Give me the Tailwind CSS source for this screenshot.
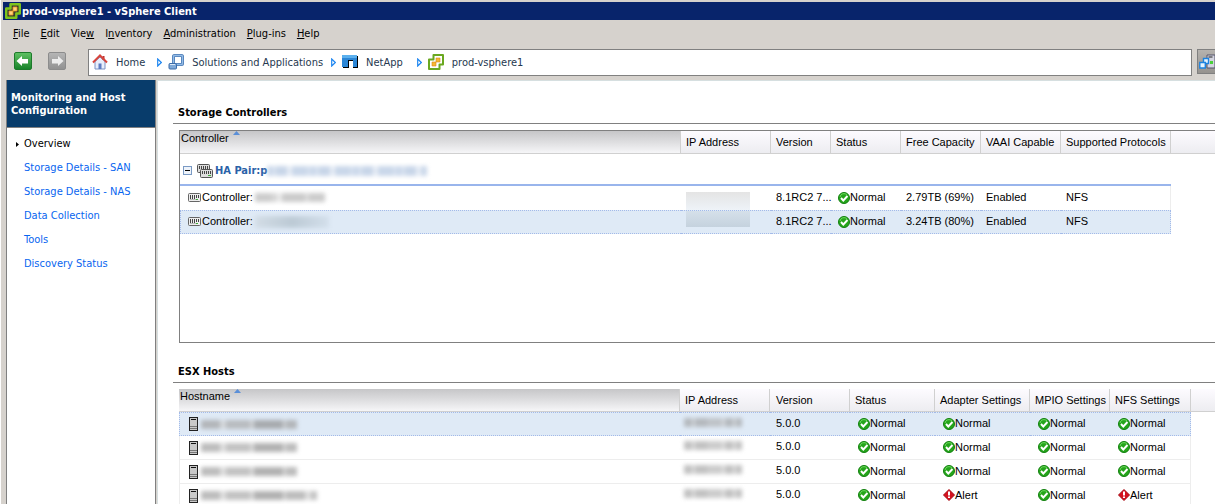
<!DOCTYPE html>
<html lang="en">
<head>
    <meta charset="UTF-8">
    <meta name="viewport" content="width=device-width, initial-scale=1.0">
    <title>prod-vsphere1 - vSphere Client</title>
    <script src="https://cdn.jsdelivr.net/npm/@tailwindcss/browser@4"></script>
</head>
<body class="h-screen overflow-hidden flex flex-col bg-[#d6d2cd] border-l border-white text-black font-['DejaVu_Sans_Condensed','Noto_Sans',sans-serif] text-[11px] leading-[13px]">

    <!-- icon sprite -->
    <svg class="hidden" aria-hidden="true">
        <symbol id="vsphere" viewBox="0 0 16 16">
            <path d="M5.500 1h9.500v9.500h-3.500V15H1V5.500h4.500z" fill="#fff" stroke="#6aa820" stroke-width="2" stroke-linejoin="round"/>
            <path d="M8 4h4v4H8z M4 8h4v4H4z" fill="#f7b733" stroke="#d88a18" stroke-width=".6"/>
        </symbol>
        <symbol id="vsphere-dark" viewBox="0 0 16 16">
            <path d="M5.500 1.200h9.300v9.300h-3.500v4.300H1.200V5.500h4.300z" fill="#3c3c30" stroke="#7fc41c" stroke-width="2.400" stroke-linejoin="round"/>
            <path d="M8 4h4v4H8z M4 8h4v4H4z" fill="#ffd37a" stroke="#e8951c" stroke-width=".8"/>
        </symbol>
        <symbol id="ok" viewBox="0 0 12 12">
            <circle cx="6" cy="6" r="5.500" fill="#25a51b" stroke="#12800f"/>
            <path d="M2 5a4 4 0 0 1 7-2" fill="none" stroke="#6bd85c"/>
            <path d="M3 6l2.300 2.500L9.500 4" fill="none" stroke="#fff" stroke-width="1.900"/>
        </symbol>
        <symbol id="alert" viewBox="0 0 12 12">
            <path d="M6 .5L11.500 6 6 11.500.5 6z" fill="#d5121e" stroke="#a30812"/>
            <path d="M5 2.500h2v4H5z M5 7.500h2v1.500H5z" fill="#fff"/>
        </symbol>
        <symbol id="controller" viewBox="0 0 13 9">
            <rect x=".5" y=".5" width="12" height="8" rx="1" fill="#eee" stroke="#666"/>
            <path d="M2.500 2v4M4.500 2v4M6.500 2v4M8.500 2v3M10.500 2v3" stroke="#444"/>
            <path d="M2 6.500h6" stroke="#bbb"/>
            <path d="M8 6.500h2" stroke="#3fae3a"/>
        </symbol>
        <symbol id="host" viewBox="0 0 9 14">
            <rect x=".5" y=".5" width="8" height="13" fill="#c9c9c9" stroke="#222"/>
            <path d="M2 2.500h5" stroke="#111"/>
            <path d="M1 9.500h7M1 11.500h7" stroke="#777"/>
        </symbol>
        <symbol id="crumb" viewBox="0 0 5 9">
            <path d="M.7 1v7L4.300 4.500z" fill="#fff" stroke="#1e86f0" stroke-width="1.200"/>
        </symbol>
        <symbol id="arrow" viewBox="0 0 16 16">
            <path d="M1.500 8L7 3v3h6v4.500H7V13z" fill="#fff"/>
        </symbol>
    </svg>

    <!-- title bar -->
    <header class="mt-[2px] ml-[2px] h-[18px] shrink-0 bg-[#08246b] flex items-center gap-px pl-[2px]">
        <svg class="size-4"><use href="#vsphere-dark"/></svg>
        <h1 class="font-bold text-white">prod-vsphere1 - vSphere Client</h1>
    </header>

    <!-- menu -->
    <nav class="h-[27px] shrink-0 flex items-center gap-[11px] pl-3" aria-label="Menu">
        <button type="button"><u>F</u>ile</button>
        <button type="button"><u>E</u>dit</button>
        <button type="button">Vie<u>w</u></button>
        <button type="button">I<u>n</u>ventory</button>
        <button type="button"><u>A</u>dministration</button>
        <button type="button"><u>P</u>lug-ins</button>
        <button type="button"><u>H</u>elp</button>
    </nav>

    <!-- navigation bar -->
    <div class="h-[33px] shrink-0 flex items-start pt-[2px] pl-[13px]">
        <button type="button" aria-label="Back" class="mt-[3px] size-[18px] rounded-xs border border-[#1d7a2b] bg-linear-to-b from-[#5cbf61] to-[#16852b]">
            <svg class="size-4"><use href="#arrow"/></svg>
        </button>
        <button type="button" aria-label="Forward" class="mt-[3px] ml-4 size-[18px] rounded-xs border border-[#8c8c8c] bg-linear-to-b from-[#b5b5b5] to-[#929292]">
            <svg class="size-4 -scale-x-100 opacity-80"><use href="#arrow"/></svg>
        </button>
        <nav class="ml-[22px] h-[27px] flex-1 bg-white border border-[#808080] flex items-center pl-[3px] pb-px text-[#26384f]" aria-label="Location">
            <a href="#" class="flex items-center gap-2">
                <svg class="size-4" viewBox="0 0 16 16">
                    <path d="M3 7.500L8 3l5 4.500V15H3z" fill="#e8eefb" stroke="#7b92c4"/>
                    <path d="M10.500 2h2v4h-2z" fill="#b33"/>
                    <path d="M1 8.500L8 1.500l7 7" fill="none" stroke="#d8453c" stroke-width="2"/>
                    <path d="M6.500 9.500h3V15h-3z" fill="#5d7cc2"/>
                </svg>
                Home
            </a>
            <svg class="ml-3 mr-[6px] w-[5px] h-[9px]"><use href="#crumb"/></svg>
            <a href="#" class="flex items-center gap-2">
                <svg class="size-4" viewBox="0 0 16 16">
                    <rect x="5.500" y="1.500" width="9" height="9" rx="1" fill="#fff" stroke="#4a7ab5" stroke-width="3"/>
                    <rect x="5.500" y="1.500" width="9" height="9" rx="1" fill="none" stroke="#94bce6" stroke-width="1.400"/>
                    <rect x="1" y="9.500" width="7.500" height="5.500" rx="1" fill="#7fa9d8" stroke="#3a6ba8"/>
                    <path d="M2 10.500h5" stroke="#dbe9f8"/>
                </svg>
                Solutions and Applications
            </a>
            <svg class="ml-2 mr-[6px] w-[5px] h-[9px]"><use href="#crumb"/></svg>
            <a href="#" class="flex items-center gap-2">
                <svg class="size-4" viewBox="0 0 16 16">
                    <path d="M1 2h15v12h-5V7H7v7H1z" fill="#000"/>
                    <path d="M0 1h15v12h-4V6H6v7H0z" fill="#2b86d6"/>
                    <path d="M0 1h15v3H0z" fill="#5bb0ee"/>
                </svg>
                NetApp
            </a>
            <svg class="ml-[14px] mr-[6px] w-[5px] h-[9px]"><use href="#crumb"/></svg>
            <a href="#" class="flex items-center gap-2">
                <svg class="size-4"><use href="#vsphere"/></svg>
                prod-vsphere1
            </a>
        </nav>
        <button type="button" aria-label="Search inventory" class="ml-[5px] h-[25px] w-[18px] border border-r-0 border-[#808080] bg-linear-to-b from-[#b5b2ae] to-[#96938f] flex items-center pl-px">
            <svg class="size-4" viewBox="0 0 16 16">
                <path d="M8 1h8v13H8z" fill="#d4d4e0" stroke="#55556a"/>
                <path d="M9.500 3h4" stroke="#222"/>
                <path d="M11 7h3v3h-3z" fill="#4ad03a"/>
                <path d="M4.500 4.500h5v5h-5z" fill="#e6f4ff" stroke="#1d83e0" stroke-width="1.400"/>
                <path d="M.8 8.500h5.500V14H.8z" fill="#e6f4ff" stroke="#1d83e0" stroke-width="1.400"/>
            </svg>
        </button>
    </div>

    <div class="flex-1 min-h-0 flex pl-[5px]">
        <!-- sidebar -->
        <aside class="w-[150px] shrink-0 bg-white border-x border-[#808080]">
            <h2 class="h-12 bg-[#083c6b] text-white font-bold pl-1 pt-[11px] border-b border-[#808080]">Monitoring and Host Configuration</h2>
            <ul class="pt-1 pl-[17px] leading-6 text-[#0865f0]">
                <li class="-ml-2 flex items-center gap-[5px] text-black">
                    <svg class="w-[3px] h-[5px]" viewBox="0 0 3 5"><path d="M0 0v5l3-2.500z"/></svg>
                    <a href="#">Overview</a>
                </li>
                <li><a href="#">Storage Details - SAN</a></li>
                <li><a href="#">Storage Details - NAS</a></li>
                <li><a href="#">Data Collection</a></li>
                <li><a href="#">Tools</a></li>
                <li><a href="#">Discovery Status</a></li>
            </ul>
        </aside>

        <main class="flex-1 min-w-0 ml-px bg-white border-t border-l border-[#d6dfe0] pl-[15px]">
            <section>
                <h2 class="font-bold pt-[25px] pb-1 pl-[5px] border-b border-[#808080]">Storage Controllers</h2>
                <div class="mt-[6px] ml-[6px] h-[213px] border border-r-0 border-[#808080]">
                    <table class="w-full table-fixed border-separate border-spacing-0 whitespace-nowrap font-['Liberation_Sans',Arial,sans-serif] text-left">
                        <colgroup>
                            <col class="w-[501px]"><col class="w-[90px]"><col class="w-[60px]"><col class="w-[70px]"><col class="w-[80px]"><col class="w-[80px]"><col class="w-[110px]"><col>
                        </colgroup>
                        <thead>
                            <tr class="h-[23px] bg-linear-to-b from-[#fdfbff] to-[#ececf0] *:font-normal *:p-0 *:border-b *:border-[#d0d0d0]">
                                <th class="align-top border-r bg-linear-to-b from-[#c6c6c8] to-[#f6f6f8]">
                                    <div class="flex items-start gap-1 pl-px"><span class="pt-px">Controller</span><svg class="w-[7px] h-1" viewBox="0 0 7 4"><path d="M0 4h7L3.500 0z" fill="#5a8fd8"/></svg></div>
                                </th>
                                <th class="border-r"><span class="pl-[5px]">IP Address</span></th>
                                <th class="border-r"><span class="pl-[5px]">Version</span></th>
                                <th class="border-r"><span class="pl-[5px]">Status</span></th>
                                <th class="border-r"><span class="pl-[5px]">Free Capacity</span></th>
                                <th class="border-r"><span class="pl-[5px]">VAAI Capable</span></th>
                                <th class="border-r"><span class="pl-[5px]">Supported Protocols</span></th>
                                <th></th>
                            </tr>
                        </thead>
                        <tbody>
                            <tr class="h-8">
                                <th colspan="7" class="p-0 border-b-2 border-[#99b5ec] font-['DejaVu_Sans_Condensed','Noto_Sans',sans-serif] text-[#2b62a8]">
                                    <div class="flex items-center pl-[3px] pt-[3px]">
                                        <button type="button" aria-label="Collapse group" class="size-[9px] border border-[#7a9ac4] bg-[#eef3fa] flex items-center justify-center"><span class="w-[5px] h-px bg-black"></span></button>
                                        <svg class="ml-[5px] w-4 h-[14px]" viewBox="0 0 16 14">
                                            <rect x=".5" y=".5" width="12" height="8" rx="1" fill="#ddd" stroke="#555"/>
                                            <path d="M2.500 2v3M4.500 2v3M6.500 2v3M8.500 2v3M10.500 2v3" stroke="#444"/>
                                            <rect x="3.500" y="5.500" width="12" height="8" rx="1" fill="#ddd" stroke="#555"/>
                                            <path d="M5.500 7v3M7.500 7v3M9.500 7v3M11.500 7v3M13.500 7v3" stroke="#444"/>
                                            <path d="M11 11.500h3" stroke="#3fae3a"/>
                                        </svg>
                                        <span class="ml-[2px]">HA Pair:p</span>
                                        <span class="w-40 h-[10px] opacity-60 blur-[2px] bg-[repeating-linear-gradient(90deg,#a9bfde_0_6px,#c2d1e6_6px_9px,#a3bada_9px_20px,#d8e2f0_20px_25px,#a6bddc_25px_40px,#bdcee5_40px_43px)]"></span>
                                    </div>
                                </th>
                                <td></td>
                            </tr>
                            <tr class="h-6 *:p-0">
                                <td><div class="flex items-center pl-2 pb-px"><svg class="w-[13px] h-[9px] mr-px"><use href="#controller"/></svg>Controller:<span class="ml-[2px] w-[70px] h-[9px] opacity-60 blur-[2px] bg-[repeating-linear-gradient(90deg,#aaa_0_16px,#bbb_16px_22px,#ddd_22px_27px,#a8a8a8_27px_50px,#c4c4c4_50px_54px)]"></span></div></td>
                                <td><div class="ml-[5px] h-[18px] mt-[6px] w-16 bg-linear-to-b from-[#e4e4e4] to-[#eef3f8]"></div></td>
                                <td><div class="pl-[5px] pb-[2px]">8.1RC2 7...</div></td>
                                <td><div class="flex items-center pl-[7px] pb-px"><svg class="size-3"><use href="#ok"/></svg>Normal</div></td>
                                <td><div class="pl-[5px] pb-[2px]">2.79TB (69%)</div></td>
                                <td><div class="pl-[5px] pb-[2px]">Enabled</div></td>
                                <td class="border-r border-[#ededed]"><div class="pl-[5px] pb-[2px]">NFS</div></td>
                                <td></td>
                            </tr>
                            <tr class="h-6 *:p-0 *:bg-[#dfeaf6] *:border-y *:border-dotted *:border-[#a3bae9]">
                                <td class="border-l"><div class="flex items-center pl-[7px] pb-px"><svg class="w-[13px] h-[9px] mr-px"><use href="#controller"/></svg>Controller:<span class="ml-[2px] w-[74px] h-3 blur-[2px] bg-linear-to-r from-[#d3dde6] via-[#bccad5] to-[#d3dfeb]"></span></div></td>
                                <td><div class="ml-[5px] h-4 -mt-[6px] w-16 bg-linear-to-b from-[#d5e0ea] to-[#c5d2de]"></div></td>
                                <td><div class="pl-[5px] pb-[2px]">8.1RC2 7...</div></td>
                                <td><div class="flex items-center pl-[7px] pb-px"><svg class="size-3"><use href="#ok"/></svg>Normal</div></td>
                                <td><div class="pl-[5px] pb-[2px]">3.24TB (80%)</div></td>
                                <td><div class="pl-[5px] pb-[2px]">Enabled</div></td>
                                <td class="border-r"><div class="pl-[5px] pb-[2px]">NFS</div></td>
                            </tr>
                        </tbody>
                    </table>
                </div>
            </section>

            <section>
                <h2 class="font-bold pt-[22px] pb-1 pl-[5px] border-b border-[#808080]">ESX Hosts</h2>
                <div class="mt-[6px] ml-[6px]">
                    <table class="w-full table-fixed border-separate border-spacing-0 whitespace-nowrap font-['Liberation_Sans',Arial,sans-serif] text-left">
                        <colgroup>
                            <col class="w-[501px]"><col class="w-[90px]"><col class="w-[80px]"><col class="w-[85px]"><col class="w-[95px]"><col class="w-[80px]"><col class="w-[81px]"><col>
                        </colgroup>
                        <thead>
                            <tr class="h-[23px] bg-linear-to-b from-[#fdfbff] to-[#ececf0] *:font-normal *:p-0 *:border-b *:border-[#d0d0d0]">
                                <th class="align-top border-r bg-linear-to-b from-[#c6c6c8] to-[#f6f6f8]">
                                    <div class="flex items-start gap-1 pl-px"><span class="pt-px">Hostname</span><svg class="w-[7px] h-1" viewBox="0 0 7 4"><path d="M0 4h7L3.500 0z" fill="#5a8fd8"/></svg></div>
                                </th>
                                <th class="border-r"><span class="pl-[5px]">IP Address</span></th>
                                <th class="border-r"><span class="pl-[6px]">Version</span></th>
                                <th class="border-r"><span class="pl-[5px]">Status</span></th>
                                <th class="border-r"><span class="pl-[5px]">Adapter Settings</span></th>
                                <th class="border-r"><span class="pl-[5px]">MPIO Settings</span></th>
                                <th class="border-r"><span class="pl-[5px]">NFS Settings</span></th>
                                <th></th>
                            </tr>
                        </thead>
                        <tbody id="hosts"></tbody>
                    </table>
                </div>
            </section>
        </main>
    </div>

    <script>
        // host names and addresses are masked, only the bar width differs
        const hosts = [
            { mask: 96, status: ['Normal', 'Normal', 'Normal', 'Normal'], selected: true },
            { mask: 96, status: ['Normal', 'Normal', 'Normal', 'Normal'] },
            { mask: 96, status: ['Normal', 'Normal', 'Normal', 'Normal'] },
            { mask: 116, status: ['Normal', 'Alert', 'Normal', 'Alert'] }
        ];

        document.getElementById('hosts').innerHTML = hosts.map(host => {
            const row = host.selected
                ? 'h-6 *:p-0 *:bg-[#dfeaf6] *:border-y *:border-dotted *:border-[#a3bae9] *:first:border-l *:last:border-r'
                : 'h-6 *:p-0 *:border-b *:border-[#ededed] *:first:border-l *:last:border-r';
            const cells = host.status.map(s =>
                `<td><div class="flex items-center pl-2 pb-px"><svg class="size-3"><use href="#${s === 'Alert' ? 'alert' : 'ok'}"/></svg>${s}</div></td>`
            ).join('');
            return `<tr class="${row}">
                <td><div class="flex items-center pl-[9px]">
                    <svg class="w-[9px] h-[14px] mr-[3px]"><use href="#host"/></svg>
                    <span class="h-[9px] opacity-70 blur-[2px] bg-[repeating-linear-gradient(90deg,#a0a0a0_0_19px,#d0d0d0_19px_25px,#a8a8a8_25px_49px,#c8c8c8_49px_53px,#909090_53px_82px,#c4c4c4_82px_85px)]" style="width:${host.mask}px"></span>
                </div></td>
                <td><div class="ml-1 -mt-1 w-[58px] h-[9px] opacity-60 blur-[2px] bg-[repeating-linear-gradient(90deg,#999_0_8px,#c4c4c4_8px_11px,#999_11px_23px,#aaa_23px_38px,#ccc_38px_41px)]"></div></td>
                <td><div class="pl-[6px] pb-[2px]">5.0.0</div></td>
                ${cells}
            </tr>`;
        }).join('');
    </script>
</body>
</html>
